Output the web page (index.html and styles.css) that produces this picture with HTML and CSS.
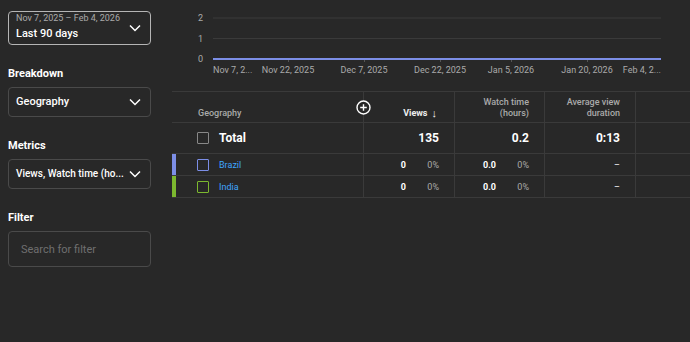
FILE: index.html
```html
<!DOCTYPE html>
<html lang="en">
<head>
<meta charset="UTF-8">
<title>Geography report</title>
<link rel="stylesheet" href="styles.css">
</head>
<body>
<div class="page">
  <aside class="sidebar">
    <div class="select select-date">
      <div>
        <div class="select-sub">Nov 7, 2025 – Feb 4, 2026</div>
        <div class="select-main">Last 90 days</div>
      </div>
      <svg class="chev" width="12" height="8" viewBox="0 0 12 8"><path d="M1 1.5 L6 6.5 L11 1.5" fill="none" stroke="#fff" stroke-width="1.5"/></svg>
    </div>

    <div class="label">Breakdown</div>
    <div class="select select-sm">
      <span class="select-main">Geography</span>
      <svg class="chev" width="12" height="8" viewBox="0 0 12 8"><path d="M1 1.5 L6 6.5 L11 1.5" fill="none" stroke="#fff" stroke-width="1.5"/></svg>
    </div>

    <div class="label">Metrics</div>
    <div class="select select-sm select-metrics">
      <span class="select-main">Views, Watch time (ho...</span>
      <svg class="chev" width="12" height="8" viewBox="0 0 12 8"><path d="M1 1.5 L6 6.5 L11 1.5" fill="none" stroke="#fff" stroke-width="1.5"/></svg>
    </div>

    <div class="label">Filter</div>
    <div class="select select-filter">
      <span class="placeholder">Search for filter</span>
    </div>
  </aside>

  <main class="main">
    <svg class="chart" width="518" height="91" viewBox="0 0 518 91">
      <g class="ylab">
        <text x="31" y="21">2</text>
        <text x="31" y="42">1</text>
        <text x="31" y="62">0</text>
      </g>
      <line x1="41" y1="18" x2="489" y2="18" stroke="#3a3a3a"/>
      <line x1="41" y1="38.5" x2="489" y2="38.5" stroke="#3a3a3a"/>
      <g stroke="#555">
        <line x1="116.5" y1="59" x2="116.5" y2="62"/>
        <line x1="192.5" y1="59" x2="192.5" y2="62"/>
        <line x1="268.5" y1="59" x2="268.5" y2="62"/>
        <line x1="339.5" y1="59" x2="339.5" y2="62"/>
        <line x1="415.5" y1="59" x2="415.5" y2="62"/>
      </g>
      <line x1="41" y1="59" x2="489" y2="59" stroke="#7c8ee6" stroke-width="2"/>
      <g class="xlab">
        <text x="41" y="73">Nov 7, 2...</text>
        <text x="116" y="73" text-anchor="middle">Nov 22, 2025</text>
        <text x="192" y="73" text-anchor="middle">Dec 7, 2025</text>
        <text x="268" y="73" text-anchor="middle">Dec 22, 2025</text>
        <text x="339" y="73" text-anchor="middle">Jan 5, 2026</text>
        <text x="415" y="73" text-anchor="middle">Jan 20, 2026</text>
        <text x="489" y="73" text-anchor="end">Feb 4, 2...</text>
      </g>
    </svg>

    <div class="table">
      <div class="row row-head">
        <div class="cell cell-dim">Geography</div>
        <div class="cell num head-views">Views <span class="arrow">&#8595;</span></div>
        <div class="cell num">Watch time<br>(hours)</div>
        <div class="cell num">Average view<br>duration</div>
        <div class="cell"></div>
        <span class="add-col">
          <svg width="15" height="15" viewBox="0 0 15 15"><circle cx="7.5" cy="7.5" r="6.5" fill="#282828" stroke="#fff" stroke-width="1.4"/><path d="M7.5 4.2 V10.8 M4.2 7.5 H10.8" stroke="#fff" stroke-width="1.4"/></svg>
        </span>
      </div>
      <div class="row row-total">
        <div class="cell cell-dim"><span class="box box-total"></span><span>Total</span></div>
        <div class="cell num">135</div>
        <div class="cell num">0.2</div>
        <div class="cell num">0:13</div>
        <div class="cell"></div>
      </div>
      <div class="row row-item">
        <div class="cell cell-dim"><span class="bar bar-blue"></span><span class="box box-blue"></span><a class="link">Brazil</a></div>
        <div class="cell num"><span class="val">0</span><span class="pct">0%</span></div>
        <div class="cell num"><span class="val">0.0</span><span class="pct">0%</span></div>
        <div class="cell num">–</div>
        <div class="cell"></div>
      </div>
      <div class="row row-item">
        <div class="cell cell-dim"><span class="bar bar-green"></span><span class="box box-green"></span><a class="link">India</a></div>
        <div class="cell num"><span class="val">0</span><span class="pct">0%</span></div>
        <div class="cell num"><span class="val">0.0</span><span class="pct">0%</span></div>
        <div class="cell num">–</div>
        <div class="cell"></div>
      </div>
    </div>
  </main>
</div>
</body>
</html>
```

FILE: styles.css
```css
html, body {
  margin: 0;
  background: #282828;
  color: #fff;
  font-family: Roboto, "Liberation Sans", sans-serif;
}

.page {
  display: flex;
  height: 342px;
}

/* Sidebar */
.sidebar {
  width: 143px;
  padding: 11px 0 0 8px;
  flex-shrink: 0;
}

.select {
  box-sizing: border-box;
  display: flex;
  align-items: center;
  justify-content: space-between;
  border: 1px solid #4a4a4a;
  border-radius: 4px;
  padding: 0 9px 0 7px;
  white-space: nowrap;
}

.select-date {
  height: 34px;
  border-color: #b5b5b5;
}

.select-sm {
  height: 30px;
}

.select-filter {
  height: 36px;
}

.select-sub {
  font-size: 9px;
  color: #aaa;
  line-height: 11px;
  margin-top: -1px;
}

.select-main {
  font-size: 11px;
  font-weight: 500;
  line-height: 16px;
}

.select-metrics .select-main {
  font-size: 10px;
}

.select-date .select-main {
  margin-top: 2px;
}

.chev {
  display: block;
  flex-shrink: 0;
}

.label {
  font-size: 11px;
  font-weight: 700;
  line-height: 14px;
  margin: 22px 0 6px;
}

.placeholder {
  font-size: 11px;
  color: #6f6f6f;
  margin-left: 5px;
}

/* Main area */
.main {
  margin-left: 21px;
  flex: 1;
}

.chart {
  display: block;
}

.ylab text {
  font-size: 9px;
  fill: #aaa;
  text-anchor: end;
}

.xlab text {
  font-size: 9px;
  fill: #aaa;
}

.table {
  border-top: 1px solid #3a3a3a;
}

.row {
  position: relative;
  display: grid;
  grid-template-columns: 191px 91px 90px 91px 1fr;
  border-bottom: 1px solid #3a3a3a;
}

.row-head {
  height: 30px;
}

.row-total {
  height: 30px;
}

.row-item {
  height: 21px;
}

.cell {
  box-sizing: border-box;
  border-left: 1px solid #3a3a3a;
  display: flex;
  align-items: center;
  font-size: 9px;
  padding-right: 15px;
}

.cell-dim {
  border-left: none;
  padding-left: 25px;
  position: relative;
}

.row-head .cell {
  color: #aaa;
  font-weight: 500;
  line-height: 11px;
  align-items: flex-end;
  padding-bottom: 3px;
}

.row-head .cell-dim {
  padding-left: 26px;
}

.num {
  justify-content: flex-end;
  text-align: right;
}

.row-head .head-views {
  color: #eee;
  font-weight: 700;
  padding-right: 17px;
}

.arrow {
  font-size: 11px;
  font-weight: 400;
  margin-left: 4px;
  line-height: 11px;
}

.row-total .cell {
  font-size: 12px;
  font-weight: 700;
}

.box {
  box-sizing: border-box;
  width: 12px;
  height: 12px;
  border: 1.5px solid #888;
  border-radius: 1px;
  margin-right: 10px;
  flex-shrink: 0;
}

.box-blue {
  border-color: #7c8ee6;
}

.box-green {
  border-color: #7cb82f;
}

.bar {
  position: absolute;
  left: 0;
  top: 0;
  bottom: 0;
  width: 4px;
}

.bar-blue {
  background: #7c8ee6;
}

.bar-green {
  background: #7cb82f;
}

.link {
  color: #3ea6ff;
  font-size: 9px;
}

.val {
  font-weight: 700;
}

.pct {
  color: #aaa;
  width: 24px;
  text-align: right;
  margin-left: 9px;
}

.add-col {
  position: absolute;
  left: 184px;
  top: 8px;
  line-height: 0;
}
```
